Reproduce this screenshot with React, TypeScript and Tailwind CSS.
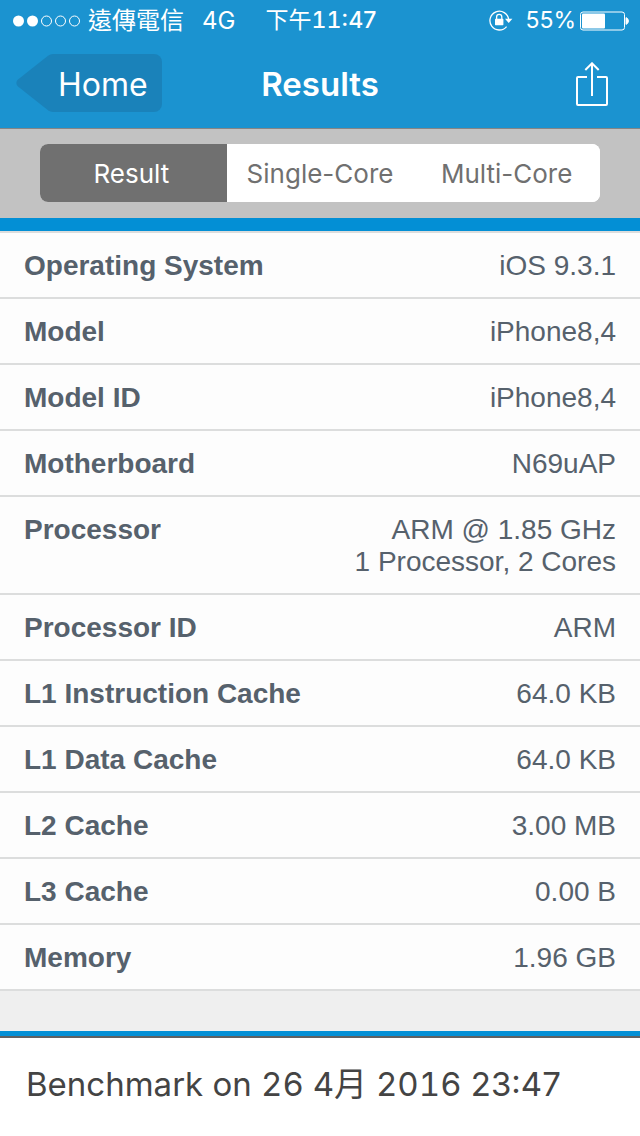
import { useState } from "react";

const tabs = ["Result", "Single-Core", "Multi-Core"];

const rows: { label: string; values: string[] }[] = [
  { label: "Operating System", values: ["iOS 9.3.1"] },
  { label: "Model", values: ["iPhone8,4"] },
  { label: "Model ID", values: ["iPhone8,4"] },
  { label: "Motherboard", values: ["N69uAP"] },
  { label: "Processor", values: ["ARM @ 1.85 GHz", "1 Processor, 2 Cores"] },
  { label: "Processor ID", values: ["ARM"] },
  { label: "L1 Instruction Cache", values: ["64.0 KB"] },
  { label: "L1 Data Cache", values: ["64.0 KB"] },
  { label: "L2 Cache", values: ["3.00 MB"] },
  { label: "L3 Cache", values: ["0.00 B"] },
  { label: "Memory", values: ["1.96 GB"] },
];

function SignalDots() {
  return (
    <svg width="68" height="12" viewBox="0 0 68 12" fill="none" aria-hidden="true">
      <circle cx="5.5" cy="6" r="5.5" fill="white" />
      <circle cx="19.5" cy="6" r="5.5" fill="white" />
      <circle cx="33.5" cy="6" r="5" stroke="white" />
      <circle cx="47.5" cy="6" r="5" stroke="white" />
      <circle cx="61.5" cy="6" r="5" stroke="white" />
    </svg>
  );
}

function RotationLock() {
  return (
    <svg width="24" height="22" viewBox="0 0 24 22" fill="none" aria-hidden="true">
      <path d="M17.6 16.6A9.4 9.4 0 1 1 19.7 9.6" stroke="white" strokeWidth="1.3" />
      <path d="M16 8.8h7.4l-3.7 4.2z" fill="white" />
      <rect x="6" y="8.8" width="8.4" height="6.4" rx="0.6" fill="white" />
      <path d="M7.6 9V6.9a2.6 2.6 0 0 1 5.2 0V9" stroke="white" strokeWidth="1.3" />
    </svg>
  );
}

function Battery() {
  return (
    <svg width="49" height="20" viewBox="0 0 49 20" fill="none" aria-hidden="true">
      <rect x="0.5" y="1" width="44" height="18" rx="2.5" stroke="white" />
      <rect x="2" y="2.5" width="23" height="15" rx="1" fill="white" />
      <path d="M46 6.6a3.6 3.6 0 0 1 0 6.8z" fill="white" stroke="white" />
    </svg>
  );
}

function ShareIcon() {
  return (
    <svg width="32" height="44" viewBox="0 0 32 44" fill="none" stroke="white" strokeWidth="2" aria-hidden="true">
      <path d="M11 15H2a1 1 0 0 0-1 1v26a1 1 0 0 0 1 1h28a1 1 0 0 0 1-1V16a1 1 0 0 0-1-1h-9" />
      <path d="M16 34V1.5M9.3 8 16 1.3 22.7 8" />
    </svg>
  );
}

export default function App() {
  const [active, setActive] = useState("Result");

  return (
    <div className="flex min-h-screen flex-col bg-[#efefef] font-['Inter','Noto_Sans_CJK_TC',sans-serif]">
      <header className="border-b border-[#858585] bg-[#1b93d0] text-white">
        <div className="grid h-10 grid-cols-[1fr_auto_1fr] items-center pt-px pr-[11px] pl-[13px] text-2xl">
          <div className="flex items-center">
            <SignalDots />
            <span className="ml-[7px]">遠傳電信</span>
            <span className="ml-[18px]">4G</span>
          </div>
          <time className="text-[23px] font-medium">
            <span className="font-normal">下午</span>
            <span className="tabular-nums">11</span>:47
          </time>
          <div className="flex items-center justify-end">
            <RotationLock />
            <span className="mr-1 ml-3 text-[23px]">55%</span>
            <Battery />
          </div>
        </div>
        <nav className="grid h-[88px] grid-cols-[1fr_auto_1fr] items-center px-4 text-[32px]">
          <a href="#home" className="relative isolate mb-0.5 flex h-[58px] w-[146px] items-center pt-[3px] pl-[42px]">
            <svg
              className="absolute inset-0 -z-10"
              width="146"
              height="58"
              viewBox="0 0 146 58"
              aria-hidden="true"
            >
              <path
                d="M37 0H138a8 8 0 0 1 8 8V50a8 8 0 0 1-8 8H37a9 9 0 0 1-5-1.7L2 32.5a4.5 4.5 0 0 1 0-7L32 1.7A9 9 0 0 1 37 0Z"
                fill="#1a82ba"
              />
            </svg>
            Home
          </a>
          <h1 className="pt-px text-[33px] font-semibold">Results</h1>
          <button type="button" aria-label="Share" className="mr-4 justify-self-end">
            <ShareIcon />
          </button>
        </nav>
      </header>

      <div className="bg-[#c2c2c2] px-10 pt-[15px] pb-4">
        <div role="tablist" className="grid h-[58px] grid-cols-3 overflow-hidden rounded-lg bg-white">
          {tabs.map((tab) => (
            <button
              key={tab}
              type="button"
              role="tab"
              aria-selected={tab === active}
              onClick={() => setActive(tab)}
              className={
                tab === active
                  ? "bg-[#707070] pr-1 text-[26px] text-white"
                  : "bg-white text-[26px] text-[#707070]"
              }
            >
              {tab}
            </button>
          ))}
        </div>
      </div>

      <main className="border-t-[13px] border-[#038fd5]">
        <table className="w-full border-separate border-spacing-0 border-t-2 border-[#dcdddd] bg-[#fdfdfd] font-['Liberation_Sans',sans-serif] text-[28px] leading-8 text-[#56616c]">
          <tbody>
            {rows.map((row) => (
              <tr key={row.label}>
                <th scope="row" className="border-b-2 border-[#dcdddd] pt-[17px] pb-[15px] pl-6 text-left align-top font-bold">
                  {row.label}
                </th>
                <td className="border-b-2 border-[#dcdddd] pt-[17px] pr-6 pb-[15px] text-right align-top">
                  {row.values.map((value) => (
                    <div key={value}>{value}</div>
                  ))}
                </td>
              </tr>
            ))}
          </tbody>
        </table>
      </main>

      <footer className="mt-10 flex grow flex-col border-t-[5px] border-[#038fd5] bg-white">
        <p className="border-t-2 border-[#5f6062] px-[26px] pt-[22px] pb-6 text-[33px] leading-[48px] text-[#444444]">
          Benchmark on <span className="tabular-nums">26 4月 2016</span> 23:47
        </p>
      </footer>
    </div>
  );
}
